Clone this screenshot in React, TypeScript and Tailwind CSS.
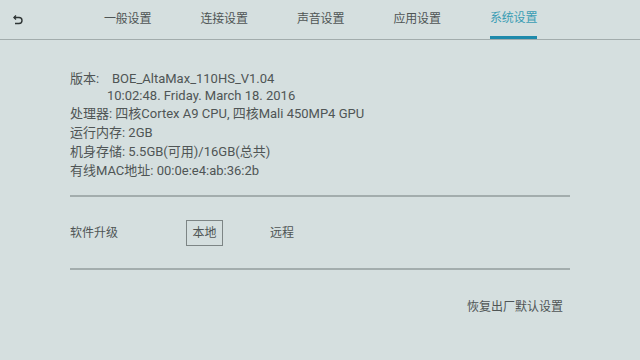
const tabs = ["一般设置", "连接设置", "声音设置", "应用设置", "系统设置"];

const info = [
  "处理器: 四核Cortex A9 CPU, 四核Mali 450MP4 GPU",
  "运行内存: 2GB",
  "机身存储: 5.5GB(可用)/16GB(总共)",
  "有线MAC地址: 00:0e:e4:ab:36:2b",
];

function BackIcon() {
  return (
    <svg width="12" height="12" viewBox="0 0 12 12" fill="none" stroke="#2f3535" strokeWidth="1.4">
      <path d="M2 3.5h5a3 3 0 0 1 0 6H3" />
      <path d="M4 1.5 2 3.5l2 2" />
    </svg>
  );
}

export default function App() {
  return (
    <div
      className="w-[640px] h-[360px] bg-[#d5dfdf] text-[#4f5555] overflow-hidden"
      style={{ fontFamily: 'Roboto, "Noto Sans CJK SC", sans-serif' }}
    >
      {/* Header */}
      <div className="h-[40px] border-b border-[#a2acac] flex items-stretch">
        <div className="w-[104px] pl-[12px] flex items-center">
          <BackIcon />
        </div>
        <div className="flex">
          {tabs.map((t, i) => {
            const active = i === tabs.length - 1;
            return (
              <div key={t} className="w-[96.5px] flex flex-col">
                <div
                  className={`h-[37px] flex items-center text-[12px] tracking-[-0.2px] ${
                    active ? "text-[#3a9db4]" : "text-[#4f5555]"
                  }`}
                >
                  {t}
                </div>
                {active && <div className="h-[3px] w-[47px] bg-[#1e8aab]" />}
              </div>
            );
          })}
        </div>
      </div>

      {/* Info */}
      <div className="px-[70px] pt-[30px] text-[13px]">
        <div className="flex leading-[17px]">
          <span className="w-[37px]">版本:</span>
          <div className="flex flex-col">
            <span className="pl-[5px]">BOE_AltaMax_110HS_V1.04</span>
            <span>10:02:48. Friday. March 18. 2016</span>
          </div>
        </div>
        <div className="flex flex-col leading-[19px]">
          {info.map((l) => (
            <span key={l}>{l}</span>
          ))}
        </div>

        <div className="mt-[15px] h-[2px] w-[500px] bg-[#a3adad]" />

        <div className="flex items-center h-[71px] text-[12px]">
          <span className="w-[116px]">软件升级</span>
          <span className="w-[37px] h-[26px] border border-[#7d8585] flex items-center justify-center">本地</span>
          <span className="ml-[47px]">远程</span>
        </div>

        <div className="h-[2px] w-[500px] bg-[#a3adad]" />

        <div className="w-[500px] flex justify-end pr-[7px] mt-[28px] text-[12px]">
          <span>恢复出厂默认设置</span>
        </div>
      </div>
    </div>
  );
}
